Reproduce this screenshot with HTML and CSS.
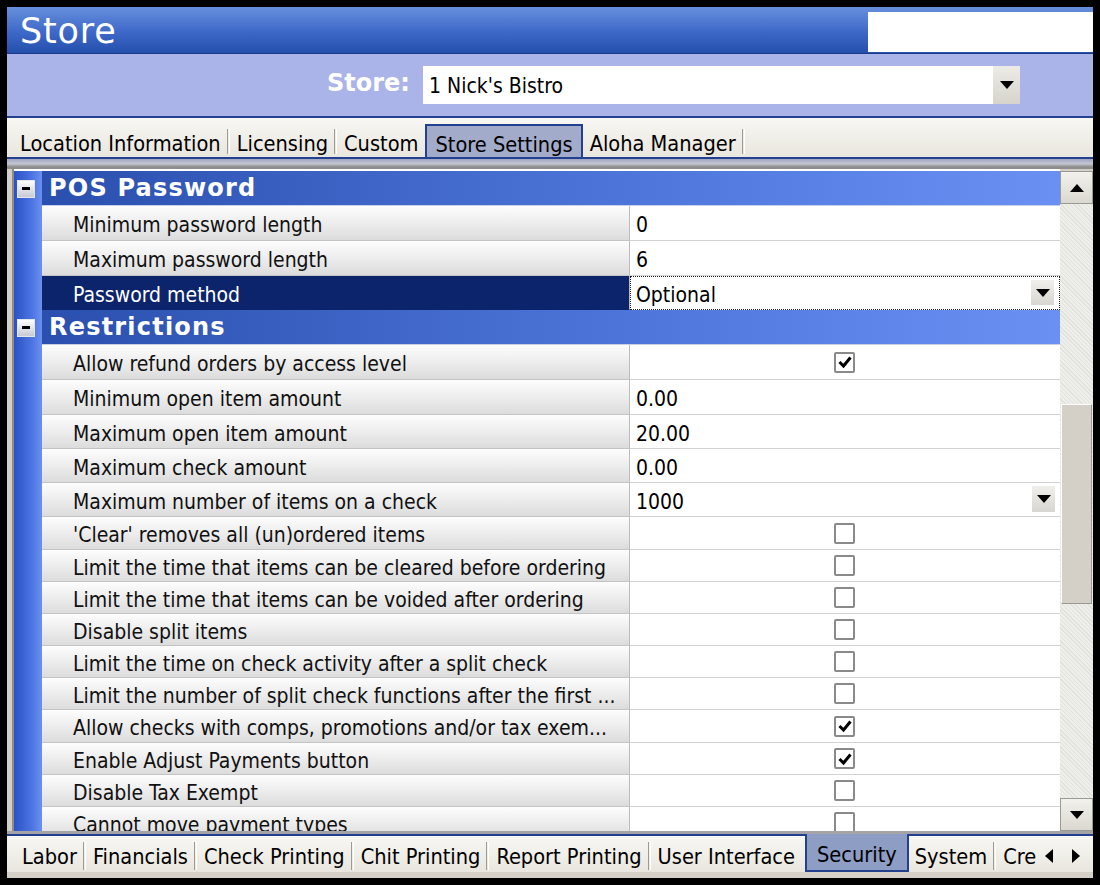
FILE: index.html
```html
<!DOCTYPE html>
<html>
<head>
<meta charset="utf-8">
<link rel="stylesheet" href="styles.css">
</head>
<body>
<div class="window">
  <div class="titlebar">
    <span class="title">Store</span>
    <div class="title-box"></div>
  </div>
  <div class="storebar">
    <span class="store-label">Store:</span>
    <div class="combo">
      <span class="combo-text">1 Nick's Bistro</span>
      <div class="combo-btn"><svg width="14" height="8" viewBox="0 0 14 8"><polygon points="0,0 14,0 7,8" fill="#000"/></svg></div>
    </div>
  </div>
  <div class="tabs tabs-top">
    <span class="tab">Location Information</span><span class="sep"></span>
    <span class="tab">Licensing</span><span class="sep"></span>
    <span class="tab">Custom</span>
    <span class="tab tab-active-top">Store Settings</span>
    <span class="tab">Aloha Manager</span><span class="sep"></span>
  </div>
  <div class="under-tabs"></div>
  <div class="gridwrap">
    <div class="grid">
      <div class="row header r35"><div class="margin"><span class="minus"><span class="minus-bar"></span></span></div><div class="head-text">POS Password</div></div>
      <div class="row r35"><div class="margin"></div><div class="label">Minimum password length</div><div class="value">0</div></div>
      <div class="row r35"><div class="margin"></div><div class="label">Maximum password length</div><div class="value">6</div></div>
      <div class="row r34 selected"><div class="margin"></div><div class="label">Password method</div><div class="value focus">Optional<span class="dd-btn"><svg width="14" height="8" viewBox="0 0 14 8"><polygon points="0,0 14,0 7,8" fill="#000"/></svg></span></div></div>
      <div class="row header r35"><div class="margin"><span class="minus"><span class="minus-bar"></span></span></div><div class="head-text">Restrictions</div></div>
      <div class="row r35"><div class="margin"></div><div class="label">Allow refund orders by access level</div><div class="value center"><span class="cb checked"><svg width="16" height="16" viewBox="0 0 16 16"><polyline points="2.5,8 6.5,12 13.5,3.5" fill="none" stroke="#000" stroke-width="3"/></svg></span></div></div>
      <div class="row r35"><div class="margin"></div><div class="label">Minimum open item amount</div><div class="value">0.00</div></div>
      <div class="row r34"><div class="margin"></div><div class="label">Maximum open item amount</div><div class="value">20.00</div></div>
      <div class="row r34"><div class="margin"></div><div class="label">Maximum check amount</div><div class="value">0.00</div></div>
      <div class="row r34"><div class="margin"></div><div class="label">Maximum number of items on a check</div><div class="value">1000<span class="dd-btn"><svg width="14" height="8" viewBox="0 0 14 8"><polygon points="0,0 14,0 7,8" fill="#000"/></svg></span></div></div>
      <div class="row r33"><div class="margin"></div><div class="label">'Clear' removes all (un)ordered items</div><div class="value center"><span class="cb"></span></div></div>
      <div class="row r32"><div class="margin"></div><div class="label">Limit the time that items can be cleared before ordering</div><div class="value center"><span class="cb"></span></div></div>
      <div class="row r32"><div class="margin"></div><div class="label">Limit the time that items can be voided after ordering</div><div class="value center"><span class="cb"></span></div></div>
      <div class="row r32"><div class="margin"></div><div class="label">Disable split items</div><div class="value center"><span class="cb"></span></div></div>
      <div class="row r32"><div class="margin"></div><div class="label">Limit the time on check activity after a split check</div><div class="value center"><span class="cb"></span></div></div>
      <div class="row r32"><div class="margin"></div><div class="label">Limit the number of split check functions after the first ...</div><div class="value center"><span class="cb"></span></div></div>
      <div class="row r33"><div class="margin"></div><div class="label">Allow checks with comps, promotions and/or tax exem...</div><div class="value center"><span class="cb checked"><svg width="16" height="16" viewBox="0 0 16 16"><polyline points="2.5,8 6.5,12 13.5,3.5" fill="none" stroke="#000" stroke-width="3"/></svg></span></div></div>
      <div class="row r32"><div class="margin"></div><div class="label">Enable Adjust Payments button</div><div class="value center"><span class="cb checked"><svg width="16" height="16" viewBox="0 0 16 16"><polyline points="2.5,8 6.5,12 13.5,3.5" fill="none" stroke="#000" stroke-width="3"/></svg></span></div></div>
      <div class="row r32"><div class="margin"></div><div class="label">Disable Tax Exempt</div><div class="value center"><span class="cb"></span></div></div>
      <div class="row r32"><div class="margin"></div><div class="label">Cannot move payment types</div><div class="value center"><span class="cb"></span></div></div>
    </div>
    <div class="scrollbar">
      <div class="sb-btn"><svg width="14" height="8" viewBox="0 0 14 8"><polygon points="0,8 14,8 7,0" fill="#000"/></svg></div>
      <div class="sb-track"><div class="sb-thumb"></div></div>
      <div class="sb-btn"><svg width="14" height="8" viewBox="0 0 14 8"><polygon points="0,0 14,0 7,8" fill="#000"/></svg></div>
    </div>
  </div>
  <div class="tabs tabs-bottom">
    <span class="tab">Labor</span><span class="sep"></span>
    <span class="tab">Financials</span><span class="sep"></span>
    <span class="tab">Check Printing</span><span class="sep"></span>
    <span class="tab">Chit Printing</span><span class="sep"></span>
    <span class="tab">Report Printing</span><span class="sep"></span>
    <span class="tab">User Interface</span>
    <span class="tab tab-active-bottom">Security</span>
    <span class="tab">System</span><span class="sep"></span>
    <span class="tab tab-clip">Cre</span>
    <span class="arrows">
      <svg width="8" height="14" viewBox="0 0 8 14"><polygon points="8,0 8,14 0,7" fill="#000"/></svg>
      <svg width="8" height="14" viewBox="0 0 8 14"><polygon points="0,0 0,14 8,7" fill="#000"/></svg>
    </span>
  </div>
</div>
</body>
</html>
```

FILE: styles.css
```css
html, body {
  margin: 0;
  padding: 0;
  background: #000;
}
body {
  width: 1100px;
  height: 885px;
  overflow: hidden;
  font-family: "DejaVu Sans Condensed", "DejaVu Sans", sans-serif;
}
.window {
  margin: 7px 7px 0 7px;
  width: 1086px;
  height: 871px;
  background: #d4d0c8;
  display: flex;
  flex-direction: column;
  overflow: hidden;
}
.titlebar {
  height: 47px;
  flex: none;
  box-sizing: border-box;
  padding-top: 1px;
  background: linear-gradient(#6690dc, #3e68c8 55%, #2450ac);
  border-bottom: 1px solid #1c3a8c;
  display: flex;
  align-items: center;
  justify-content: space-between;
}
.title {
  color: #fff;
  font-family: "DejaVu Sans", sans-serif;
  font-size: 35px;
  padding-left: 13px;
  letter-spacing: 0.8px;
  margin-top: 1px;
}
.title-box {
  width: 225px;
  height: 40px;
  background: #fff;
  align-self: flex-end;
  margin-bottom: 1px;
}
.storebar {
  height: 64px;
  flex: none;
  box-sizing: border-box;
  background: #aab4e8;
  border-bottom: 2px solid #23408f;
  display: flex;
  align-items: center;
  padding-left: 320px;
}
.store-label {
  color: #fff;
  font-family: "DejaVu Sans", sans-serif;
  font-weight: bold;
  font-size: 24px;
  width: 96px;
  margin-top: -4px;
}
.combo {
  width: 597px;
  height: 38px;
  background: #fff;
  display: flex;
  align-items: center;
  justify-content: space-between;
  margin-top: -1px;
}
.combo-text {
  font-size: 21px;
  padding-left: 6px;
  padding-top: 2px;
  color: #000;
}
.combo-btn {
  width: 27px;
  height: 38px;
  background: linear-gradient(#ecebe6, #d6d4cc);
  display: flex;
  align-items: center;
  justify-content: center;
}
.tabs {
  display: flex;
  align-items: center;
  background: linear-gradient(#f8f7f3, #e8e6de);
  font-size: 21.6px;
  color: #000;
}
.tabs-top {
  height: 41px;
  flex: none;
  box-sizing: border-box;
  padding-left: 11px;
  padding-top: 6px;
  border-bottom: 2px solid #23408f;
  align-items: stretch;
}
.tab {
  padding: 0 2px;
  display: flex;
  align-items: center;
  white-space: nowrap;
}
.tabs-top .tab {
  padding-top: 5px;
}
.sep {
  width: 1px;
  border-left: 1px solid #9c9a92;
  border-right: 1px solid #fff;
  margin: 6px 4px 2px 4px;
}
.tabs-top .sep {
  margin: 5px 5px 3px 4px;
}
.tab-active-top {
  background: #a3abca;
  border: 2px solid #23408f;
  border-bottom: none;
  margin: 0 5px 0 5px;
  padding: 0 8px 0 8px;
}
.under-tabs {
  height: 8px;
  flex: none;
  background: linear-gradient(#9ea6c4, #c4c6d0 60%, #8a8a8a);
}
.gridwrap {
  height: 667px;
  flex: none;
  display: flex;
  padding-left: 5px;
  background: #d4d0c8;
  border-top: 2px solid #8d8d8d;
  border-bottom: 3px solid #a4a4a8;
  box-sizing: border-box;
}
.grid {
  width: 1047px;
  overflow: hidden;
  border-left: 2px solid #8d8d8d;
  display: flex;
  flex-direction: column;
  padding-top: 2px;
  background: #fff;
}
.row {
  display: grid;
  grid-template-columns: 28px 588px 1fr;
  flex: none;
  box-sizing: border-box;
}
.r35 { height: 35px; }
.r34 { height: 34px; }
.r33 { height: 33px; }
.r32 { height: 32px; }
.margin {
  background: linear-gradient(90deg, #2c52c4, #4a72e0 60%, #6a90f0);
  display: flex;
  align-items: center;
  justify-content: center;
}
.header .head-text {
  grid-column: 2 / 4;
  background: linear-gradient(90deg, #2a4fae, #4c74d8 55%, #6a90f4);
  color: #fff;
  font-family: "DejaVu Sans", sans-serif;
  font-weight: bold;
  font-size: 24px;
  padding-left: 7px;
  display: flex;
  align-items: center;
  letter-spacing: 1.2px;
  border-bottom: 1px solid #c8d0e8;
}
.minus {
  width: 18px;
  height: 18px;
  box-sizing: border-box;
  border: 1px solid #e6e6e6;
  background: linear-gradient(#ffffff, #c8cad4);
  display: flex;
  align-items: center;
  justify-content: center;
  margin-right: 4px;
}
.minus-bar {
  width: 8px;
  height: 3px;
  background: #000;
}
.label {
  background: linear-gradient(#fdfdfd, #ededed 50%, #dcdcdc);
  border-bottom: 1px solid #c4c4c4;
  border-right: 1px solid #bdbdbd;
  padding-left: 31px;
  padding-top: 4px;
  display: flex;
  align-items: center;
  font-size: 21px;
  color: #111;
  white-space: nowrap;
  overflow: hidden;
}
.value {
  background: #fff;
  border-bottom: 1px solid #d2d2d2;
  display: flex;
  align-items: center;
  padding-left: 6px;
  padding-top: 4px;
  font-size: 21px;
  color: #000;
  position: relative;
}
.value.center {
  justify-content: center;
  padding-left: 0;
  padding-right: 1px;
  padding-top: 0;
}
.selected .label {
  background: #0c246c;
  color: #fff;
  border-bottom-color: #0c246c;
}
.value.focus {
  border: 1px dotted #222;
  padding-left: 5px;
}
.dd-btn {
  position: absolute;
  right: 5px;
  top: 3px;
  bottom: 4px;
  width: 23px;
  background: linear-gradient(#f0efeb, #d8d6d0);
  display: flex;
  align-items: center;
  justify-content: center;
}
.cb {
  width: 21px;
  height: 21px;
  box-sizing: border-box;
  border: 2px solid #8a8a8a;
  border-radius: 2px;
  background: #fff;
  display: flex;
  align-items: center;
  justify-content: center;
}
.scrollbar {
  width: 33px;
  display: flex;
  flex-direction: column;
  padding-top: 2px;
}
.sb-btn {
  height: 33px;
  flex: none;
  box-sizing: border-box;
  background: linear-gradient(#f2f1ec, #dad8d0);
  border: 1px solid #9a9a94;
  display: flex;
  align-items: center;
  justify-content: center;
}
.sb-track {
  flex: 1;
  background-color: #eeeeea;
  background-image: repeating-linear-gradient(45deg, #e2e2dc 0 1px, transparent 1px 3px);
}
.sb-thumb {
  margin-top: 200px;
  height: 200px;
  margin-left: 1px;
  margin-right: 1px;
  box-sizing: border-box;
  background: #d4d0c8;
  border: 1px solid #9a9a94;
  border-top-color: #fff;
  border-left-color: #fff;
}
.tabs-bottom {
  height: 38px;
  flex: none;
  box-sizing: border-box;
  border-top: 2px solid #23408f;
  padding-left: 13px;
  align-items: stretch;
}
.tabs-bottom .tab {
  padding-top: 5px;
}
.tabs-bottom .sep {
  margin: 6px 5px 2px 4px;
}
.tab-active-bottom {
  background: #8d9dc4;
  border: 2px solid #23408f;
  border-top: none;
  margin: -2px 4px 0 8px;
  padding: 2px 10px 0 10px;
}
.tab-clip {
  width: 34px;
  overflow: hidden;
  padding-right: 0;
}
.arrows {
  display: flex;
  align-items: center;
  gap: 19px;
  margin-left: 8px;
  padding-top: 3px;
}
```
